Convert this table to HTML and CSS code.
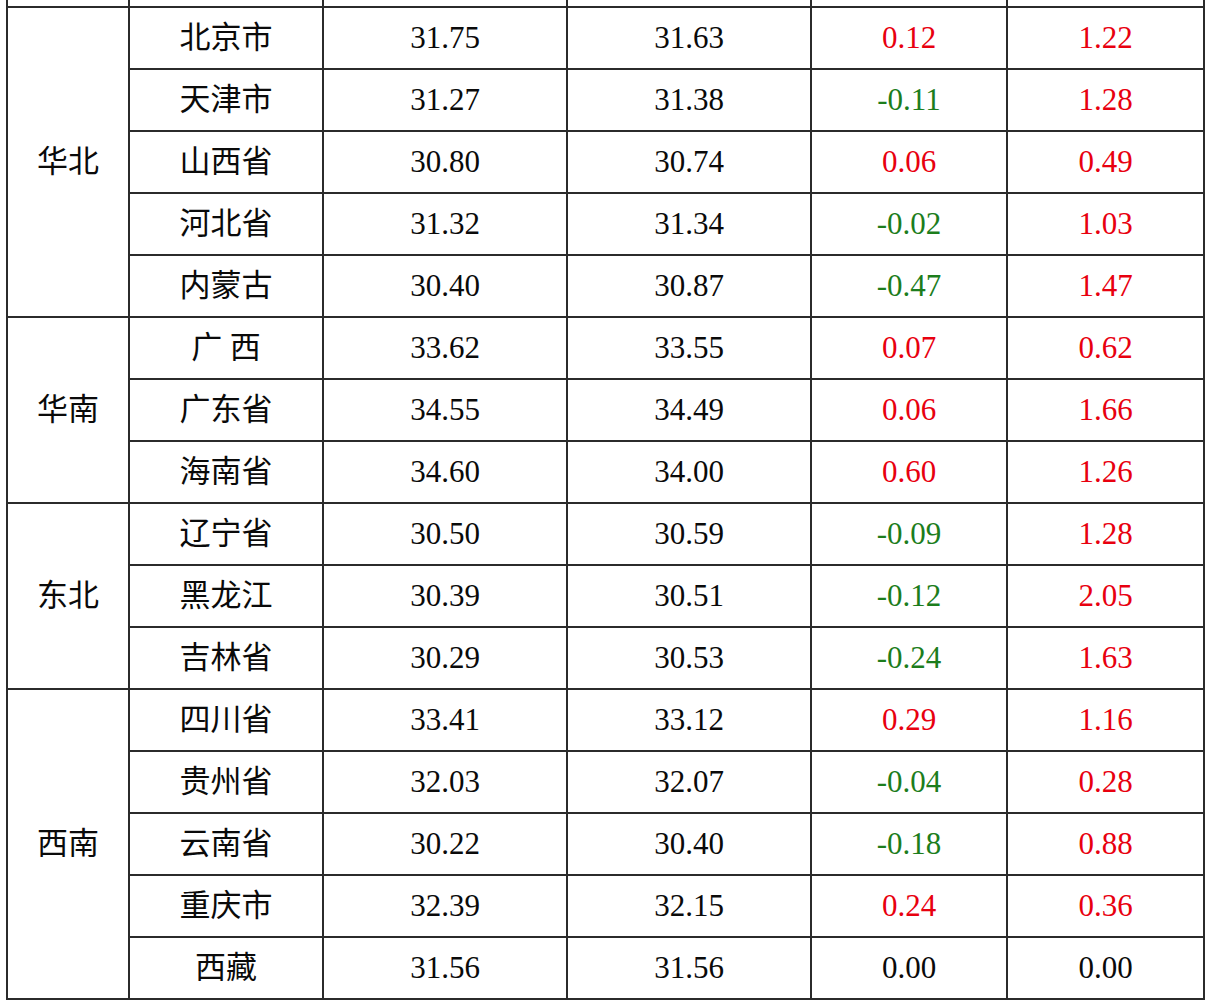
FILE: index.html
```html
<!DOCTYPE html>
<html lang="zh">
<head>
<meta charset="utf-8">
<link rel="stylesheet" href="styles.css">
</head>
<body>
<table class="price">
<colgroup>
<col class="c1"><col class="c2"><col class="c3"><col class="c4"><col class="c5"><col class="c6">
</colgroup>
<tbody>
<tr class="cut"><td></td><td></td><td></td><td></td><td></td><td></td></tr>
<tr><td class="region" rowspan="5">华北</td><td>北京市</td><td>31.75</td><td>31.63</td><td class="up">0.12</td><td class="up">1.22</td></tr>
<tr><td>天津市</td><td>31.27</td><td>31.38</td><td class="down">-0.11</td><td class="up">1.28</td></tr>
<tr><td>山西省</td><td>30.80</td><td>30.74</td><td class="up">0.06</td><td class="up">0.49</td></tr>
<tr><td>河北省</td><td>31.32</td><td>31.34</td><td class="down">-0.02</td><td class="up">1.03</td></tr>
<tr><td>内蒙古</td><td>30.40</td><td>30.87</td><td class="down">-0.47</td><td class="up">1.47</td></tr>
<tr><td class="region" rowspan="3">华南</td><td>广 西</td><td>33.62</td><td>33.55</td><td class="up">0.07</td><td class="up">0.62</td></tr>
<tr><td>广东省</td><td>34.55</td><td>34.49</td><td class="up">0.06</td><td class="up">1.66</td></tr>
<tr><td>海南省</td><td>34.60</td><td>34.00</td><td class="up">0.60</td><td class="up">1.26</td></tr>
<tr><td class="region" rowspan="3">东北</td><td>辽宁省</td><td>30.50</td><td>30.59</td><td class="down">-0.09</td><td class="up">1.28</td></tr>
<tr><td>黑龙江</td><td>30.39</td><td>30.51</td><td class="down">-0.12</td><td class="up">2.05</td></tr>
<tr><td>吉林省</td><td>30.29</td><td>30.53</td><td class="down">-0.24</td><td class="up">1.63</td></tr>
<tr><td class="region" rowspan="5">西南</td><td>四川省</td><td>33.41</td><td>33.12</td><td class="up">0.29</td><td class="up">1.16</td></tr>
<tr><td>贵州省</td><td>32.03</td><td>32.07</td><td class="down">-0.04</td><td class="up">0.28</td></tr>
<tr><td>云南省</td><td>30.22</td><td>30.40</td><td class="down">-0.18</td><td class="up">0.88</td></tr>
<tr><td>重庆市</td><td>32.39</td><td>32.15</td><td class="up">0.24</td><td class="up">0.36</td></tr>
<tr><td>西藏</td><td>31.56</td><td>31.56</td><td>0.00</td><td>0.00</td></tr>
</tbody>
</table>
</body>
</html>
```
FILE: styles.css
```css
html, body {
  margin: 0;
  padding: 0;
  background: #ffffff;
}

body {
  padding-left: 6px;
  font-family: "Liberation Serif", "Noto Sans CJK SC", serif;
  color: #0a0a0a;
}

.price {
  border-collapse: collapse;
  table-layout: fixed;
  width: 1199px;
  font-size: 31px;
}

.c1 { width: 122px; }
.c2 { width: 194px; }
.c3 { width: 244px; }
.c4 { width: 244px; }
.c5 { width: 196px; }
.c6 { width: 197px; }

.price td {
  border: 2px solid #2b2b2b;
  height: 59px;
  padding: 0 0 1px 0;
  text-align: center;
  vertical-align: middle;
  line-height: 1;
}

.price tr.cut td {
  border-top: none;
  height: 6px;
  padding: 0;
}

.price td.up { color: #e8000f; }
.price td.down { color: #1c7d1c; }
```
